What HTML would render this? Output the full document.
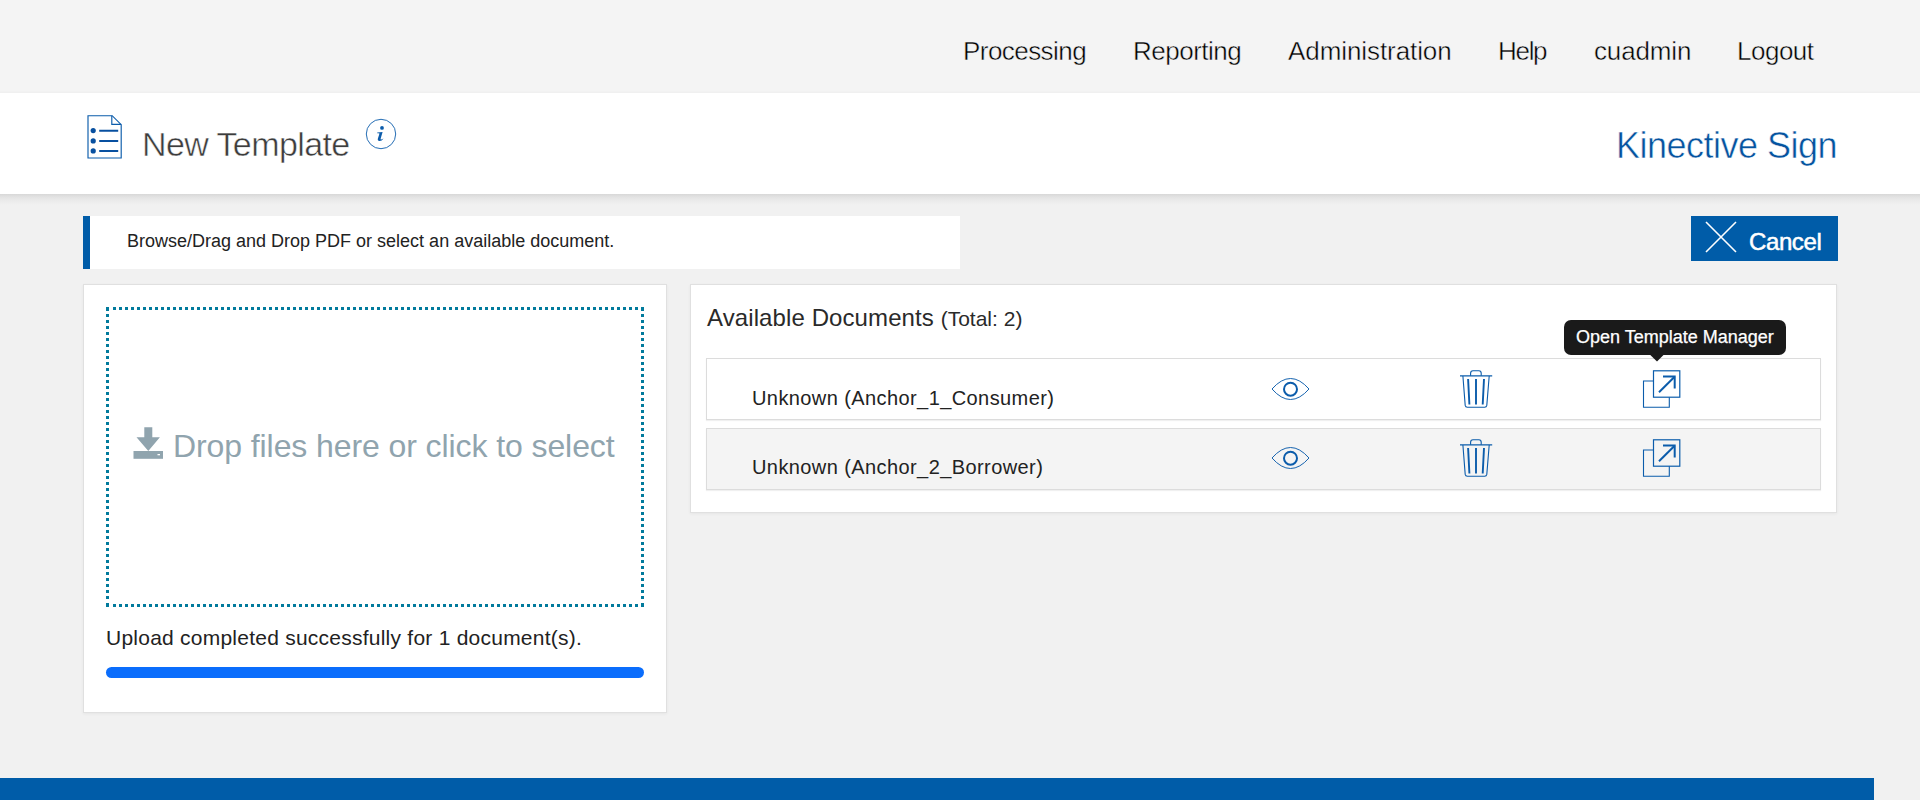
<!DOCTYPE html>
<html>
<head>
<meta charset="utf-8">
<style>
html,body{margin:0;padding:0;width:1920px;height:800px;overflow:hidden;background:#f1f1f1;font-family:"Liberation Sans",sans-serif;}
.a{position:absolute;white-space:nowrap;line-height:1;}
#nav{position:absolute;left:0;top:0;width:1920px;height:93px;background:#f4f4f4;}
#hdr{position:absolute;left:0;top:93px;width:1920px;height:101px;background:#fff;}
#hshadow{position:absolute;left:0;top:194px;width:1920px;height:11px;background:linear-gradient(to bottom,#d8d8d8 0%,#e3e3e3 30%,#ebebeb 60%,#f1f1f1 100%);}
#nline{position:absolute;left:0;top:91px;width:1920px;height:2px;background:linear-gradient(to bottom,#f3f3f3,#efefef);}
.nv{font-size:26px;color:#000;top:38px;-webkit-text-stroke:0.45px #f4f4f4;}
#banner{position:absolute;left:83px;top:216px;width:877px;height:53px;background:#fff;}
#banner .bar{position:absolute;left:0;top:0;width:7px;height:53px;background:#005ca8;}
#cancel{position:absolute;left:1691px;top:216px;width:147px;height:45px;background:#005ca8;}
.panel{position:absolute;background:#fff;border:1px solid #e0e0e0;box-sizing:border-box;box-shadow:0 1px 3px rgba(0,0,0,0.05);}
#lp{left:83px;top:284px;width:584px;height:429px;}
#rp{left:690px;top:284px;width:1147px;height:229px;}
#dz{position:absolute;left:106px;top:307px;width:538px;height:300px;box-sizing:border-box;border:3px dotted #017a9c;}
#prog{position:absolute;left:106px;top:667px;width:538px;height:11px;border-radius:6px;background:#0a6dfc;}
.row{position:absolute;left:706px;width:1115px;height:62px;box-sizing:border-box;border:1px solid #dcdcdc;box-shadow:0 1px 1px rgba(0,0,0,0.06);}
#r1{top:358px;background:#fff;}
#r2{top:428px;background:#f4f4f4;}
#footer{position:absolute;left:0;top:778px;width:1874px;height:22px;background:#005ca8;}
#tip{position:absolute;left:1564px;top:320px;width:222px;height:35px;background:#1a1a1a;border-radius:7px;}
svg{position:absolute;overflow:visible;}
</style>
</head>
<body>
<div id="nav"></div>
<div class="a nv" style="left:963px;letter-spacing:-0.55px">Processing</div>
<div class="a nv" style="left:1133px;letter-spacing:-0.5px">Reporting</div>
<div class="a nv" style="left:1288px;letter-spacing:-0.08px">Administration</div>
<div class="a nv" style="left:1498px;letter-spacing:-1.3px">Help</div>
<div class="a nv" style="left:1594px;letter-spacing:-0.15px">cuadmin</div>
<div class="a nv" style="left:1737px;letter-spacing:-0.5px">Logout</div>

<div id="nline"></div>
<div id="hdr"></div>
<div id="hshadow"></div>
<!-- doc icon -->
<svg style="left:0;top:0" width="1" height="1">
  <path d="M88 115.7 H112.2 L121.2 124.7 V158 H88 Z" fill="none" stroke="#0b5cab" stroke-width="1.15"/>
  <path d="M111.8 115.7 V124.4 H121.2" fill="none" stroke="#0b5cab" stroke-width="1.15"/>
  <circle cx="93.2" cy="130.6" r="2.6" fill="#0850a0"/>
  <circle cx="93.2" cy="140.9" r="2.6" fill="#0850a0"/>
  <circle cx="93.2" cy="150.9" r="2.6" fill="#0850a0"/>
  <path d="M99.2 130.8 H118.2 M99.2 141 H118.2 M99.2 150.9 H118.2" stroke="#0850a0" stroke-width="2"/>
</svg>
<div class="a" style="left:142px;top:127px;font-size:34px;color:#3c3c3c;letter-spacing:-0.6px;-webkit-text-stroke:0.5px #fff;">New Template</div>
<svg style="left:0;top:0" width="1" height="1">
  <circle cx="381" cy="134" r="14.7" fill="none" stroke="#0b5cab" stroke-width="0.9"/>
  <circle cx="382" cy="127.9" r="1.9" fill="#0b5cab"/>
  <path d="M377.2 132.4 L382.6 131.9 L380.7 138.4 Q380.3 139.8 381.3 139.5 L383.5 138.6 Q381.6 141.3 379.4 141.1 Q377.3 140.9 377.9 138.6 L379.5 133.6 Q379.6 133 377.2 133.3 Z" fill="#0b5cab"/>
</svg>
<div class="a" style="left:1616px;top:128px;font-size:36px;color:#05539f;letter-spacing:-0.5px;-webkit-text-stroke:0.5px #fff;">Kinective Sign</div>

<div id="banner"><div class="bar"></div></div>
<div class="a" style="left:127px;top:232px;font-size:18px;color:#222;">Browse/Drag and Drop PDF or select an available document.</div>

<div id="cancel"></div>
<svg style="left:0;top:0" width="1" height="1">
  <path d="M1706 222 L1736 252 M1736 222 L1706 252" stroke="#fff" stroke-width="1.6"/>
</svg>
<div class="a" style="left:1749px;top:230px;font-size:24px;color:#fff;letter-spacing:-0.4px;-webkit-text-stroke:0.5px #fff;">Cancel</div>

<div class="panel" id="lp"></div>
<div id="dz"></div>
<svg style="left:0;top:0" width="1" height="1">
  <path d="M144.3 427.2 H152.3 V437.3 H159.9 L148.3 451 L136.5 437.3 H144.3 Z" fill="#90a4ae"/>
  <rect x="133.5" y="451" width="29.5" height="7.8" fill="#90a4ae"/>
  <rect x="157.5" y="454" width="2.5" height="1.3" fill="#fff"/>
</svg>
<div class="a" style="left:173px;top:430px;font-size:32px;color:#90a4ae;letter-spacing:-0.09px;">Drop files here or click to select</div>
<div class="a" style="left:106px;top:627px;font-size:21px;color:#222;letter-spacing:0.24px;">Upload completed successfully for 1 document(s).</div>
<div id="prog"></div>

<div class="panel" id="rp"></div>
<div class="a" style="left:707px;top:306px;font-size:24px;color:#2a2a2a;letter-spacing:0.1px">Available Documents <span style="font-size:21px;letter-spacing:0">(Total: 2)</span></div>
<div class="row" id="r1"></div>
<div class="row" id="r2"></div>
<div class="a" style="left:752px;top:388px;font-size:20px;color:#222;letter-spacing:0.41px;">Unknown (Anchor_1_Consumer)</div>
<div class="a" style="left:752px;top:457px;font-size:20px;color:#222;letter-spacing:0.41px;">Unknown (Anchor_2_Borrower)</div>

<svg style="left:0;top:0px" width="1" height="1">
  <path d="M1272 389 Q1290.5 368 1309 389 Q1290.5 410 1272 389 Z" fill="none" stroke="#0b5cab" stroke-width="0.95"/>
  <circle cx="1290.5" cy="389.2" r="6.5" fill="none" stroke="#0b5cab" stroke-width="2"/>
  <path d="M1460 375.8 H1492.2" stroke="#0b5cab" stroke-width="1.2"/>
  <path d="M1470.6 375.8 V373.2 Q1470.6 370.8 1473 370.8 H1478.9 Q1481.2 370.8 1481.2 373.2 V375.8" fill="none" stroke="#0b5cab" stroke-width="1.1"/>
  <path d="M1462.9 376 L1465.2 405.4 Q1465.5 407.3 1467.3 407.3 H1484.7 Q1486.5 407.3 1486.8 405.4 L1489.2 376" fill="none" stroke="#0b5cab" stroke-width="1.1"/>
  <path d="M1468.1 379 L1469.4 404.5 M1476 379 V404.5 M1484 379 L1482.7 404.5" stroke="#0b5cab" stroke-width="1.9"/>
  <path d="M1653.5 381 H1643.5 V407.2 H1669.3 V397.2" fill="none" stroke="#0b5cab" stroke-width="1.1"/>
  <rect x="1653.5" y="370.8" width="26.3" height="26.4" fill="none" stroke="#0b5cab" stroke-width="1.2"/>
  <path d="M1659 392.3 L1674.6 376.7" stroke="#0b5cab" stroke-width="2"/>
  <path d="M1663 376.6 H1674.7 V388.5" fill="none" stroke="#0b5cab" stroke-width="2"/>
</svg>
<svg style="left:0;top:69px" width="1" height="1">
  <path d="M1272 389 Q1290.5 368 1309 389 Q1290.5 410 1272 389 Z" fill="none" stroke="#0b5cab" stroke-width="0.95"/>
  <circle cx="1290.5" cy="389.2" r="6.5" fill="none" stroke="#0b5cab" stroke-width="2"/>
  <path d="M1460 375.8 H1492.2" stroke="#0b5cab" stroke-width="1.2"/>
  <path d="M1470.6 375.8 V373.2 Q1470.6 370.8 1473 370.8 H1478.9 Q1481.2 370.8 1481.2 373.2 V375.8" fill="none" stroke="#0b5cab" stroke-width="1.1"/>
  <path d="M1462.9 376 L1465.2 405.4 Q1465.5 407.3 1467.3 407.3 H1484.7 Q1486.5 407.3 1486.8 405.4 L1489.2 376" fill="none" stroke="#0b5cab" stroke-width="1.1"/>
  <path d="M1468.1 379 L1469.4 404.5 M1476 379 V404.5 M1484 379 L1482.7 404.5" stroke="#0b5cab" stroke-width="1.9"/>
  <path d="M1653.5 381 H1643.5 V407.2 H1669.3 V397.2" fill="none" stroke="#0b5cab" stroke-width="1.1"/>
  <rect x="1653.5" y="370.8" width="26.3" height="26.4" fill="none" stroke="#0b5cab" stroke-width="1.2"/>
  <path d="M1659 392.3 L1674.6 376.7" stroke="#0b5cab" stroke-width="2"/>
  <path d="M1663 376.6 H1674.7 V388.5" fill="none" stroke="#0b5cab" stroke-width="2"/>
</svg>
<div id="tip"></div>
<svg style="left:0;top:0" width="1" height="1"><path d="M1649.8 354.5 H1664 L1657 361.6 Z" fill="#1a1a1a"/></svg>
<div class="a" style="left:1576px;top:328px;font-size:18px;color:#fff;-webkit-text-stroke:0.25px #fff;">Open Template Manager</div>

<div id="footer"></div>
</body>
</html>
